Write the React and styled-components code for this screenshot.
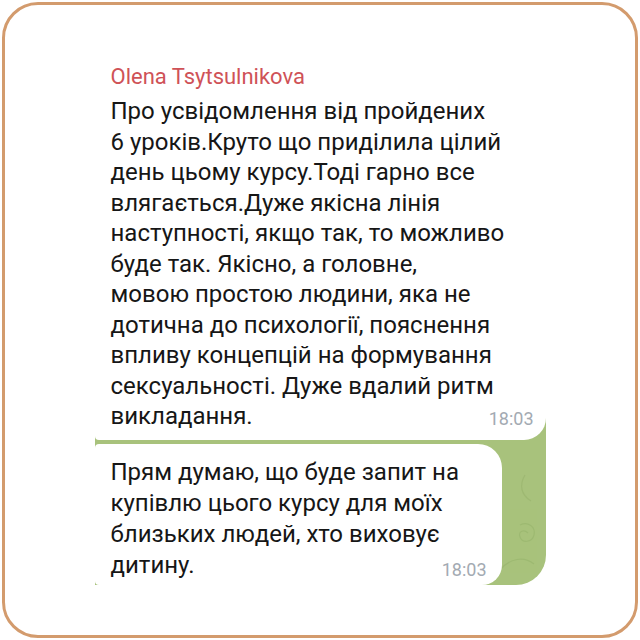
import React from "react";
import styled, { createGlobalStyle } from "styled-components";

const Global = createGlobalStyle`
  html, body { margin: 0; padding: 0; background: #ffffff; }
  body { font-family: Roboto, "Noto Sans", sans-serif; }
`;

const Frame = styled.div`
  box-sizing: border-box;
  margin: 2px;
  width: 636px;
  height: 636px;
  border: 3px solid #d39b6d;
  border-radius: 36px;
  background: #ffffff;
  display: flex;
  justify-content: center;
  align-items: flex-start;
  padding-top: 53px;
`;

const Shot = styled.div`
  position: relative;
  width: 451px;
  background: #a8c27c;
  border-bottom-right-radius: 30px;
  overflow: hidden;
  display: flex;
  flex-direction: column;
  gap: 4px;
`;

const Pattern = styled.svg`
  position: absolute;
  right: 0;
  bottom: 0;
  width: 451px;
  height: 150px;
  pointer-events: none;
`;

const Bubble = styled.div`
  position: relative;
  z-index: 1;
  box-sizing: border-box;
  background: #ffffff;
  width: ${(p) => p.$width};
  padding: ${(p) => p.$pad};
  border-radius: ${(p) => p.$radius};
  color: #161616;
  font-family: Roboto, "Noto Sans", sans-serif;
  font-size: 24px;
`;

const Name = styled.div`
  font-size: 22px;
  font-weight: 400;
  line-height: 24px;
  color: #cf5257;
  margin-bottom: 7px;
`;

const Line = styled.div`
  line-height: ${(p) => p.$lh}px;
  white-space: nowrap;
`;

const LastRow = styled.div`
  display: flex;
  justify-content: space-between;
  align-items: baseline;
  line-height: ${(p) => p.$lh}px;
  white-space: nowrap;
`;

const Time = styled.span`
  font-size: 18px;
  color: #a3aab2;
  position: relative;
  top: ${(p) => p.$drop || 0}px;
`;

const first = [
  "Про усвідомлення від пройдених",
  "6 уроків.Круто що приділила цілий",
  "день цьому курсу.Тоді гарно все",
  "влягається.Дуже якісна лінія",
  "наступності, якщо так, то можливо",
  "буде так. Якісно, а головне,",
  "мовою простою людини, яка не",
  "дотична до психології, пояснення",
  "впливу концепцій на формування",
  "сексуальності. Дуже вдалий ритм",
];

const second = [
  "Прям думаю, що буде запит на",
  "купівлю цього курсу для моїх",
  "близьких людей, хто виховує",
];

export default function App() {
  return (
    <>
      <Global />
      <Frame>
        <Shot>
          <Pattern viewBox="0 0 451 150" fill="none">
            <g stroke="#97b36c" strokeWidth="1.2" opacity="0.6">
              <path d="M380 20c10 5 14 14 8 22s-18 6-16-4 12-10 16-2" />
              <path d="M425 90c8-4 16 2 14 10s-12 8-14 2 4-8 8-4" />
              <path d="M405 135c10-12 24-14 34-6" />
              <path d="M360 60c6 10 4 22-6 30" />
              <path d="M430 40c-6 10-4 20 6 26" />
            </g>
          </Pattern>
          <Bubble $width="451px" $pad="7px 12px 6px 16px" $radius="0 0 22px 4px">
            <Name>Olena Tsytsulnikova</Name>
            {first.map((t) => (
              <Line key={t} $lh={30.5}>
                {t}
              </Line>
            ))}
            <LastRow $lh={30.5}>
              <span>викладання.</span>
              <Time $drop={1}>18:03</Time>
            </LastRow>
          </Bubble>
          <Bubble $width="407px" $pad="13px 15px 3px 16px" $radius="4px 24px 20px 4px">
            {second.map((t) => (
              <Line key={t} $lh={31}>
                {t}
              </Line>
            ))}
            <LastRow $lh={31}>
              <span>дитину.</span>
              <Time $drop={3}>18:03</Time>
            </LastRow>
          </Bubble>
        </Shot>
      </Frame>
    </>
  );
}
